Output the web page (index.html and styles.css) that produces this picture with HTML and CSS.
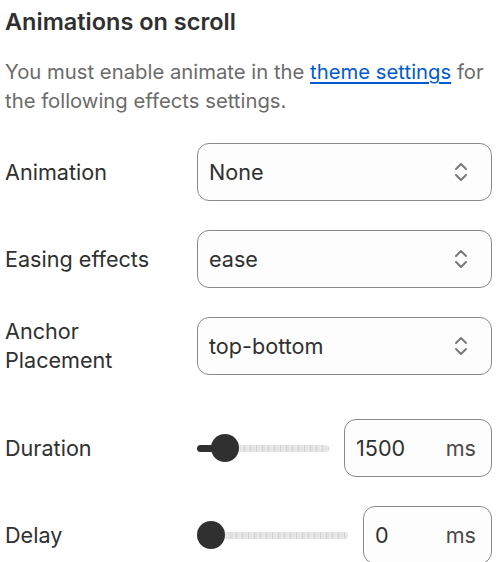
FILE: index.html
```html
<!DOCTYPE html>
<html lang="en">
<head>
<meta charset="utf-8">
<title>Animations on scroll</title>
<link rel="stylesheet" href="styles.css">
</head>
<body>
<div class="panel">
  <h2 class="title">Animations on scroll</h2>
  <p class="desc">You must enable animate in the <a href="#" class="link">theme settings</a> for the following effects settings.</p>

  <div class="rows">
    <div class="row">
      <div class="label">Animation</div>
      <div class="select"><span class="value">None</span><svg class="chev" viewBox="0 0 14 22" width="14" height="22"><path d="M2 8 L7 3 L12 8 M2 14 L7 19 L12 14" fill="none" stroke="#7a7a7a" stroke-width="2" stroke-linecap="round" stroke-linejoin="round"/></svg></div>
    </div>
    <div class="row">
      <div class="label">Easing effects</div>
      <div class="select"><span class="value">ease</span><svg class="chev" viewBox="0 0 14 22" width="14" height="22"><path d="M2 8 L7 3 L12 8 M2 14 L7 19 L12 14" fill="none" stroke="#7a7a7a" stroke-width="2" stroke-linecap="round" stroke-linejoin="round"/></svg></div>
    </div>
    <div class="row">
      <div class="label">Anchor<br>Placement</div>
      <div class="select"><span class="value">top-bottom</span><svg class="chev" viewBox="0 0 14 22" width="14" height="22"><path d="M2 8 L7 3 L12 8 M2 14 L7 19 L12 14" fill="none" stroke="#7a7a7a" stroke-width="2" stroke-linecap="round" stroke-linejoin="round"/></svg></div>
    </div>
    <div class="row row-gap">
      <div class="label">Duration</div>
      <div class="range-wrap">
        <div class="slider">
          <div class="fill fill-dur"></div>
          <div class="thumb"></div>
          <div class="track"></div>
        </div>
        <div class="numbox num-wide"><span class="num">1500</span><span class="unit">ms</span></div>
      </div>
    </div>
    <div class="row">
      <div class="label">Delay</div>
      <div class="range-wrap">
        <div class="slider">
          <div class="thumb"></div>
          <div class="track"></div>
        </div>
        <div class="numbox num-narrow"><span class="num">0</span><span class="unit">ms</span></div>
      </div>
    </div>
  </div>
</div>
</body>
</html>
```

FILE: styles.css
```css
* { box-sizing: border-box; }
html, body { margin: 0; padding: 0; background: #ffffff; }
body {
  font-family: Inter, "Noto Sans", "Liberation Sans", sans-serif;
  color: #303030;
  overflow: hidden;
}
.panel {
  padding: 8px 8px 0 5px;
}
.title {
  margin: 0;
  font-size: 23.5px;
  font-weight: 600;
  line-height: 28px;
  color: #303030;
}
.desc {
  margin: 21px 0 0;
  font-size: 20.3px;
  line-height: 29px;
  color: #6b6b6b;
}
.link {
  color: #005bd3;
  text-decoration: underline;
  text-underline-offset: 3px;
}
.rows {
  margin-top: 28px;
  display: flex;
  flex-direction: column;
  gap: 29px;
}
.row {
  display: grid;
  grid-template-columns: 192px 1fr;
  align-items: center;
  min-height: 58px;
}
.row-gap { margin-top: 15px; }
.label {
  font-size: 21.6px;
  line-height: 29px;
  color: #303030;
}
.select {
  height: 58px;
  border: 1px solid #8a8a8a;
  border-radius: 12px;
  background: #fdfdfd;
  display: flex;
  align-items: center;
  justify-content: space-between;
  padding: 0 23px 0 11px;
}
.value {
  font-size: 21.6px;
  color: #303030;
}
.chev { display: block; }
.range-wrap {
  display: flex;
  align-items: center;
  gap: 15px;
}
.slider {
  flex: 1;
  display: flex;
  align-items: center;
  height: 30px;
}
.fill {
  height: 7px;
  background: #303030;
  border-radius: 4px 0 0 4px;
}
.fill-dur { width: 16px; margin-right: -2px; }
.thumb {
  width: 28px;
  height: 28px;
  border-radius: 50%;
  background: #303030;
  flex: none;
}
.track {
  flex: 1;
  height: 7px;
  border-radius: 0 4px 4px 0;
  background:
    repeating-linear-gradient(90deg, #e6e6e6 0 5px, #d2d2d2 5px 6px);
}
.numbox {
  height: 58px;
  border: 1px solid #8a8a8a;
  border-radius: 12px;
  background: #fdfdfd;
  display: flex;
  align-items: center;
  padding: 0 15px 0 11px;
  font-size: 21.6px;
  color: #303030;
}
.num-wide { width: 148px; }
.num-narrow { width: 129px; }
.num { flex: 1; }
.unit { color: #4a4a4a; }
```
